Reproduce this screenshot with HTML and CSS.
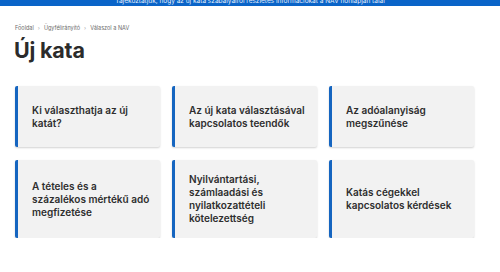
FILE: index.html
```html
<!DOCTYPE html>
<html lang="hu">
<head>
<meta charset="UTF-8">
<meta name="viewport" content="width=device-width, initial-scale=1.0">
<title>Új kata</title>
<link rel="stylesheet" href="styles.css">
</head>
<body>

<div class="topbar">
    <span>Tájékoztatjuk, hogy az új kata szabályairól részletes információkat a NAV honlapján talál</span>
</div>

<div class="page">
    <nav class="breadcrumb">
        <a href="#">Főoldal</a>
        <span class="sep">›</span>
        <a href="#">Ügyfélirányító</a>
        <span class="sep">›</span>
        <span>Válaszol a NAV</span>
    </nav>

    <h1>Új kata</h1>

    <div class="cards">
        <a class="card" href="#">Ki választhatja az új katát?</a>
        <a class="card" href="#">Az új kata választásával kapcsolatos teendők</a>
        <a class="card" href="#">Az adóalanyiság megszűnése</a>
        <a class="card" href="#">A tételes és a százalékos mértékű adó megfizetése</a>
        <a class="card" href="#">Nyilvántartási, számlaadási és nyilatkozattételi kötelezettség</a>
        <a class="card" href="#">Katás cégekkel kapcsolatos kérdések</a>
    </div>
</div>

</body>
</html>
```

FILE: styles.css
```css
body {
    margin: 0;
    font-family: 'Inter', 'Noto Sans', sans-serif;
    background-color: #fff;
    color: #2e2e2e;
}
.topbar {
    height: 6px;
    background-color: #0a64c8;
    overflow: hidden;
    display: flex;
    justify-content: center;
    align-items: flex-end;
}
.topbar span {
    font-size: 6.5px;
    line-height: 9px;
    color: #e8f0fb;
    white-space: nowrap;
}
.page {
    padding: 0 25px 0 15px;
}
.breadcrumb {
    margin-top: 19px;
    font-size: 5.5px;
    line-height: 7px;
    color: #6b6b6b;
    display: flex;
    gap: 4px;
}
.breadcrumb a {
    color: #6b6b6b;
    text-decoration: none;
}
.breadcrumb .sep {
    color: #aaa;
}
h1 {
    margin: 5px 0 0 -1px;
    font-size: 21.5px;
    line-height: 27px;
    font-weight: 700;
    letter-spacing: -0.2px;
    color: #2b2b2b;
}
.cards {
    margin-top: 22px;
    display: grid;
    grid-template-columns: repeat(3, 145px);
    column-gap: 12px;
    row-gap: 13px;
}
.card {
    display: flex;
    align-items: center;
    min-height: 35px;
    padding: 13px 8px 13px 14px;
    background-color: #f2f2f2;
    border-left: 3px solid #1565c0;
    border-radius: 2px;
    box-shadow: 0 1px 2px rgba(0, 0, 0, 0.18);
    font-size: 10px;
    line-height: 13px;
    font-weight: 600;
    color: #2e2e2e;
    text-decoration: none;
}
```
